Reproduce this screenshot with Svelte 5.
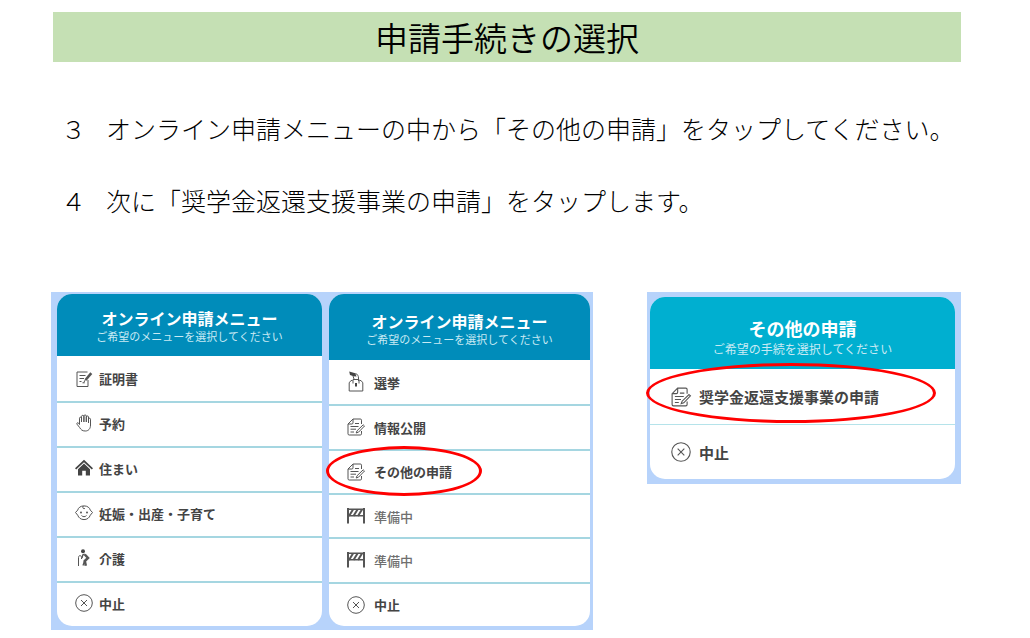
<script>
    const menus = [
        {
            title: 'オンライン申請メニュー',
            sub: 'ご希望のメニューを選択してください',
            kind: 'first',
            items: [
                { icon: 'note', label: '証明書' },
                { icon: 'hand', label: '予約' },
                { icon: 'house', label: '住まい' },
                { icon: 'baby', label: '妊娠・出産・子育て' },
                { icon: 'care', label: '介護' },
                { icon: 'cancel', label: '中止' }
            ]
        },
        {
            title: 'オンライン申請メニュー',
            sub: 'ご希望のメニューを選択してください',
            kind: 'second',
            items: [
                { icon: 'vote', label: '選挙' },
                { icon: 'paper', label: '情報公開' },
                { icon: 'paper', label: 'その他の申請', marked: true },
                { icon: 'fence', label: '準備中', soon: true },
                { icon: 'fence', label: '準備中', soon: true },
                { icon: 'cancel', label: '中止' }
            ]
        }
    ];

    const other = {
        title: 'その他の申請',
        sub: 'ご希望の手続を選択してください',
        kind: 'other',
        items: [
            { icon: 'paper', label: '奨学金返還支援事業の申請', marked: true },
            { icon: 'cancel', label: '中止' }
        ]
    };
</script>

{#snippet icon(name)}
    <svg class="icon" viewBox="0 0 18 18" aria-hidden="true">
        {#if name === 'note'}
            <path d="M12.5 2H2v14.5h11V10" />
            <path d="M4.5 5.5h6M4.5 8.5h4.5M4.5 11.5h2" />
            <path d="M7.5 12.8h2.2" />
            <path d="M16.3 3.2 10.5 10" stroke-width="2.6" />
            <path d="m10.5 9.5-1.7 3" />
        {:else if name === 'hand'}
            <path d="M4.500 10.500V4.200c0-1.400 2-1.400 2 0V8V2.400c0-1.400 2.400-1.400 2.400 0V8V2c0-1.400 2.400-1.400 2.400 0v6V3c0-1.400 2.200-1.400 2.200 0v6V5.200c0-1.300 2-1.300 2 0V11c0 4-2.200 6-5.200 6-3.200 0-4.400-1.400-5.600-3.400L2 10.200C1.400 8.800 2.800 8.200 3.600 9.200l.9 1.300" />
        {:else if name === 'house'}
            <path class="solid" d="M9 .8 18 9.300l-1.200 1.300L9 3.300 1.200 10.600 0 9.300z" />
            <path class="solid" d="m9 4.600 6 5.700v6.200h-4.200v-4.700H7.200v4.700H3v-6.200z" />
        {:else if name === 'baby'}
            <path d="M9 1.900c3.500 0 5.600 1.700 6.300 4.200l2.200 2.400-2.200 2.700c-.9 2.600-3.200 4.400-6.300 4.400s-5.400-1.800-6.300-4.400L.5 8.500l2.200-2.400C3.400 3.600 5.500 1.900 9 1.900z" />
            <path d="M8.200 2c-1 1.800.1 3.200 1.700 2.500M6.500 11.500c1.300 1.600 3.700 1.600 5 0" />
            <circle class="solid" cx="6" cy="8.500" r=".9" />
            <circle class="solid" cx="12" cy="8.500" r=".9" />
        {:else if name === 'care'}
            <circle class="solid" cx="8" cy="2.200" r="2" />
            <path d="M3.500 17V8.500c0-2.500 3-2.500 3 0v1.500" />
            <path d="m7 9 .7-3 2-.8" stroke-width="1.400" />
            <path d="M9.800 5.500 13 9l-3.200 3 1 4.800" stroke-width="2.500" />
            <path d="m9.500 12-1.500 4.500" stroke-width="1.300" />
        {:else if name === 'vote'}
            <path class="solid" d="M2.200-1.500 8.300.2 9.500 3.500 6.500 3.200 3 2z" />
            <path d="M8.500.5c2 .5 3 2.500 3 4.500v3M6 3l1 3" />
            <path d="M5.500 7.500H4L2.200 9.800V18h13.600V9.800L14 7.500h-1.500" />
            <path d="M6 10.500V6.500h6v4" />
            <path class="solid" d="M8 10h2v3.500H8z" />
        {:else if name === 'paper'}
            <path d="M14.500 6V2.200c0-.8-.4-1.200-1.200-1.200H6L1 6v9.800c0 .8.4 1.200 1.200 1.200h11.100c.8 0 1.200-.4 1.200-1.200V13" />
            <path d="M6 1v3.800C6 5.600 5.600 6 4.800 6H1" />
            <path d="M8 5.500h4M3.500 8.500h8M3.500 11.200h5.500M3.500 14h3.500" />
            <path d="m16.200 6.800 1.300 1.200-6 6.200-2.300.8.800-2.200z" />
        {:else if name === 'fence'}
            <path d="M1 1v15.500M17 1v15.500" stroke-width="2" />
            <path d="M1 2.200h16M1 8.800h16" stroke-width="1.400" />
            <path d="m2 9 4-6.500M6.500 9l4-6.500M11 9l4-6.500" stroke-width="2" />
        {:else if name === 'cancel'}
            <circle cx="9" cy="9" r="8.300" />
            <path d="m6 6 6 6M12 6l-6 6" />
        {/if}
    </svg>
{/snippet}

{#snippet card(menu)}
    <section class="card {menu.kind}">
        <header>
            <h2>{menu.title}</h2>
            <p>{menu.sub}</p>
        </header>
        <ul>
            {#each menu.items as item}
                <li>
                    <button type="button" class:soon={item.soon}>
                        {@render icon(item.icon)}
                        <span>{item.label}</span>
                    </button>
                    {#if item.marked}
                        <div class="ring"></div>
                    {/if}
                </li>
            {/each}
        </ul>
    </section>
{/snippet}

<main>
    <h1>申請手続きの選択</h1>

    <div class="steps">
        <p><span>３</span><span>オンライン申請メニューの中から「その他の申請」をタップしてください。</span></p>
        <p><span>４</span><span>次に「奨学金返還支援事業の申請」をタップします。</span></p>
    </div>

    <div class="screens">
        <div class="screen pair">
            {#each menus as menu}
                {@render card(menu)}
            {/each}
        </div>
        <div class="screen single">
            {@render card(other)}
        </div>
    </div>
</main>

<style>
    :global(body) {
        margin: 0;
        background: #fff;
    }

    main {
        padding: 12px 69px 8px 51px;
        font-family: "Noto Sans CJK JP", sans-serif;
        color: #000;
    }

    h1, h2, p, ul {
        margin: 0;
        padding: 0;
    }

    h1 {
        margin-left: 2px;
        background: #c5e0b4;
        font-size: 33px;
        font-weight: 350;
        line-height: 50px;
        text-align: center;
    }

    .steps {
        display: flex;
        flex-direction: column;
        gap: 36px;
        margin-top: 48px;
        padding-left: 10px;
    }

    .steps p {
        display: flex;
        gap: 20px;
        font-size: 25px;
        font-weight: 300;
        line-height: 36px;
        white-space: nowrap;
    }

    .screens {
        display: grid;
        grid-template-columns: 542fr 314fr;
        gap: 54px;
        align-items: start;
        margin-top: 74px;
    }

    .screen {
        background: #b7d3fb;
    }

    .pair {
        display: grid;
        grid-template-columns: 265fr 261fr;
        gap: 7px;
        padding: 2px 3px 4px 6px;
    }

    .single {
        padding: 5px 6px 5px 3px;
    }

    .card {
        display: flex;
        flex-direction: column;
        background: #fff;
        border-radius: 15px;
    }

    header {
        background: #008cba;
        border-radius: 15px 15px 0 0;
        color: #fff;
        text-align: center;
        white-space: nowrap;
    }

    .first header {
        padding: 14px 0 12px;
    }

    .second header {
        padding: 17px 0 13px;
    }

    .other header {
        padding: 19px 0 11px;
        background: #00afd0;
    }

    h2 {
        font-size: 16px;
        font-weight: 700;
        line-height: 20px;
    }

    header p {
        font-size: 11px;
        line-height: 16px;
        color: #c9eaf4;
    }

    .other h2 {
        font-size: 18px;
        line-height: 24px;
    }

    .other header p {
        font-size: 12px;
        line-height: 18px;
    }

    ul {
        display: grid;
        flex: 1;
        grid-auto-rows: 1fr;
        list-style: none;
    }

    li {
        position: relative;
        display: flex;
        min-height: 44px;
    }

    .first li {
        min-height: 45px;
    }

    .other li {
        min-height: 55px;
    }

    li + li {
        box-sizing: border-box;
        border-top: 2px solid #a5d6e1;
    }

    .other li + li {
        border-top: 1px solid #b5e3ea;
    }

    button {
        display: flex;
        flex: 1;
        align-items: center;
        gap: 6px;
        padding: 0 18px;
        border: 0;
        background: none;
        color: #444;
        font-family: inherit;
        font-size: 13px;
        font-weight: 700;
        text-align: left;
        white-space: nowrap;
    }

    .first li + li button {
        padding-bottom: 3px;
    }

    .second button {
        gap: 9px;
    }

    .other button {
        gap: 8px;
        padding: 0 21px;
        font-size: 15px;
    }

    button.soon {
        color: #707070;
        font-weight: 500;
    }

    .icon {
        flex: none;
        width: 18px;
        height: 18px;
        overflow: visible;
        fill: none;
        stroke: #555;
        stroke-width: 1;
    }

    .other .icon {
        width: 20px;
        height: 20px;
    }

    .solid {
        fill: #444;
        stroke: none;
    }

    /* red ellipse drawn over the row to tap */
    .ring {
        position: absolute;
        top: -5px;
        left: -3px;
        z-index: 1;
        box-sizing: border-box;
        width: 156px;
        height: 50px;
        border: 3px solid #f00;
        border-radius: 50%;
        pointer-events: none;
    }

    .other .ring {
        top: -6px;
        left: -4px;
        width: 290px;
        height: 60px;
    }
</style>
